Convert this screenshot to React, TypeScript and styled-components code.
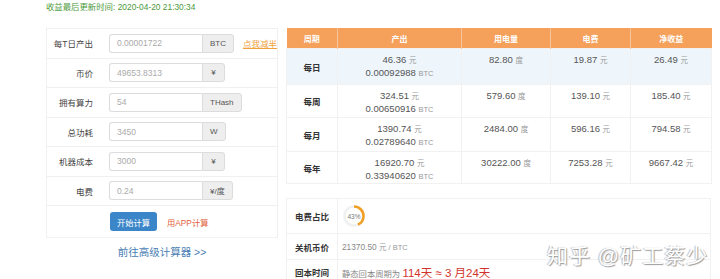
import React from 'react'
import styled, { createGlobalStyle } from 'styled-components'

interface Field {
  label: string
  value: string
  unit: string
  link?: string
}

interface ResultRow {
  period: string
  cny: string
  btc: string
  power: string
  fee: string
  profit: string
  height: number
  highlight?: boolean
}

const fields: Field[] = [
  { label: '每T日产出', value: '0.00001722', unit: 'BTC', link: '点我减半' },
  { label: '币价', value: '49653.8313', unit: '¥' },
  { label: '拥有算力', value: '54', unit: 'THash' },
  { label: '总功耗', value: '3450', unit: 'W' },
  { label: '机器成本', value: '3000', unit: '¥' },
  { label: '电费', value: '0.24', unit: '¥/度' },
]

const results: ResultRow[] = [
  { period: '每日', cny: '46.36', btc: '0.00092988', power: '82.80', fee: '19.87', profit: '26.49', height: 36, highlight: true },
  { period: '每周', cny: '324.51', btc: '0.00650916', power: '579.60', fee: '139.10', profit: '185.40', height: 33 },
  { period: '每月', cny: '1390.74', btc: '0.02789640', power: '2484.00', fee: '596.16', profit: '794.58', height: 34 },
  { period: '每年', cny: '16920.70', btc: '0.33940620', power: '30222.00', fee: '7253.28', profit: '9667.42', height: 32 },
]

const FEE_RATIO = 43

export default function App(): JSX.Element {
  const ringLength = 2 * Math.PI * 9.5
  return (
    <Page>
      <GlobalStyle />
      <Updated>收益最后更新时间: 2020-04-20 21:30:34</Updated>
      <Columns>
        <FormColumn>
          <FormCard>
            {fields.map((f) => (
              <FieldRow key={f.label}>
                <FieldLabel>{f.label}</FieldLabel>
                <InputGroup>
                  <Input defaultValue={f.value} readOnly />
                  <Addon>{f.unit}</Addon>
                </InputGroup>
                {f.link !== undefined ? <HalveLink>{f.link}</HalveLink> : null}
              </FieldRow>
            ))}
            <ActionRow>
              <PrimaryButton>开始计算</PrimaryButton>
              <AppLink>用APP计算</AppLink>
            </ActionRow>
          </FormCard>
          <AdvancedLink>前往高级计算器 &gt;&gt;</AdvancedLink>
        </FormColumn>

        <ResultColumn>
          <ResultTable>
            <colgroup>
              <col style={{ width: 51 }} />
              <col style={{ width: 124 }} />
              <col style={{ width: 89 }} />
              <col style={{ width: 80 }} />
              <col style={{ width: 81 }} />
            </colgroup>
            <thead>
              <tr>
                <HeadCell>周期</HeadCell>
                <HeadCell>产出</HeadCell>
                <HeadCell>用电量</HeadCell>
                <HeadCell>电费</HeadCell>
                <HeadCell>净收益</HeadCell>
              </tr>
            </thead>
            <tbody>
              {results.map((r) => (
                <BodyRow key={r.period} $height={r.height} $highlight={r.highlight}>
                  <PeriodCell>{r.period}</PeriodCell>
                  <ValueCell>
                    <Line>
                      {r.cny} <Unit>元</Unit>
                    </Line>
                    <Line>
                      {r.btc} <Unit>BTC</Unit>
                    </Line>
                  </ValueCell>
                  <ValueCell>
                    {r.power} <Unit>度</Unit>
                  </ValueCell>
                  <ValueCell>
                    {r.fee} <Unit>元</Unit>
                  </ValueCell>
                  <ValueCell>
                    {r.profit} <Unit>元</Unit>
                  </ValueCell>
                </BodyRow>
              ))}
            </tbody>
          </ResultTable>

          <SummaryTable>
            <colgroup>
              <col style={{ width: 51 }} />
              <col />
            </colgroup>
            <tbody>
              <SummaryRow $height={35}>
                <SummaryLabel>电费占比</SummaryLabel>
                <SummaryValue>
                  <Ring>
                    <svg width="24" height="24" viewBox="0 0 24 24">
                      <circle cx="12" cy="12" r="9.5" fill="none" stroke="#f1f1f1" strokeWidth="2.6" />
                      <circle
                        cx="12"
                        cy="12"
                        r="9.5"
                        fill="none"
                        stroke="#f0a024"
                        strokeWidth="2.6"
                        strokeDasharray={`${(ringLength * FEE_RATIO) / 100} ${ringLength}`}
                        transform="rotate(-90 12 12)"
                      />
                    </svg>
                    <RingText>{FEE_RATIO}%</RingText>
                  </Ring>
                </SummaryValue>
              </SummaryRow>
              <SummaryRow $height={26}>
                <SummaryLabel>关机币价</SummaryLabel>
                <SummaryValue>
                  21370.50 <Unit>元 / BTC</Unit>
                </SummaryValue>
              </SummaryRow>
              <SummaryRow $height={24}>
                <SummaryLabel>回本时间</SummaryLabel>
                <SummaryValue>
                  静态回本周期为 <Payback>114天 ≈ 3 月24天</Payback>
                </SummaryValue>
              </SummaryRow>
            </tbody>
          </SummaryTable>
        </ResultColumn>
      </Columns>
      <Watermark>知乎 @矿工蔡少</Watermark>
    </Page>
  )
}

const GlobalStyle = createGlobalStyle`
  html, body {
    margin: 0;
    background: #ffffff;
  }
  body {
    font-family: "Liberation Sans", "Noto Sans CJK SC", sans-serif;
    color: #333;
  }
`

const Page = styled.div`
  position: relative;
  width: 720px;
  height: 279px;
  overflow: hidden;
  padding-left: 46px;
  box-sizing: border-box;
`

const Updated = styled.div`
  height: 14px;
  line-height: 14px;
  font-size: 8.4px;
  color: #4e9a3c;
`

const Columns = styled.div`
  display: flex;
  gap: 8px;
  margin-top: 14px;
  align-items: flex-start;
`

const FormColumn = styled.div`
  width: 232px;
  display: flex;
  flex-direction: column;
`

const FormCard = styled.div`
  border: 1px solid #f0f0f0;
  border-bottom-color: #f3f3f3;
`

const FieldRow = styled.div`
  display: flex;
  align-items: center;
  height: 28.5px;
  border-bottom: 1px solid #f0f0f0;
`

const FieldLabel = styled.label`
  width: 46px;
  margin-right: 16px;
  text-align: right;
  font-size: 8.5px;
  color: #444;
`

const InputGroup = styled.div`
  display: flex;
  height: 19px;
`

const Input = styled.input`
  width: 93px;
  height: 19px;
  box-sizing: border-box;
  border: 1px solid #dcdcdc;
  border-right: none;
  border-radius: 3px 0 0 3px;
  padding: 0 7px;
  font-family: inherit;
  font-size: 8.5px;
  color: #aaa;
  outline: none;
`

const Addon = styled.span`
  min-width: 23px;
  box-sizing: border-box;
  padding: 0 7px;
  display: flex;
  align-items: center;
  justify-content: center;
  background: #eeeeee;
  border: 1px solid #dcdcdc;
  border-radius: 0 3px 3px 0;
  font-size: 8px;
  color: #555;
`

const HalveLink = styled.a`
  margin-left: 9px;
  font-size: 8.5px;
  color: #f0a23c;
  text-decoration: underline;
`

const ActionRow = styled.div`
  display: flex;
  align-items: center;
  gap: 10px;
  height: 31px;
  padding-left: 63px;
`

const PrimaryButton = styled.button`
  height: 19px;
  width: 47px;
  padding: 0;
  border: none;
  border-radius: 3px;
  background: #3b86c8;
  color: #ffffff;
  font-family: inherit;
  font-size: 8.3px;
`

const AppLink = styled.a`
  font-size: 8.3px;
  color: #e2623e;
`

const AdvancedLink = styled.a`
  margin-top: 7px;
  text-align: center;
  font-size: 10.5px;
  line-height: 14px;
  color: #4a80b4;
`

const ResultColumn = styled.div`
  width: 425px;
  display: flex;
  flex-direction: column;
  gap: 14px;
`

const ResultTable = styled.table`
  width: 425px;
  border-collapse: collapse;
  table-layout: fixed;
`

const HeadCell = styled.th`
  height: 20px;
  padding: 0;
  background: #f5a15c;
  color: #ffffff;
  font-size: 8px;
  font-weight: bold;
  border-left: 1px solid #f9c497;
  &:first-child {
    border-left: none;
  }
`

const BodyRow = styled.tr<{ $height: number; $highlight?: boolean }>`
  height: ${(p) => p.$height}px;
  background: ${(p) => (p.$highlight === true ? '#eef6fc' : '#ffffff')};
  td {
    border: 1px solid #f1f1f1;
  }
`

const PeriodCell = styled.td`
  padding: 0;
  text-align: center;
  vertical-align: middle;
  font-size: 8.5px;
  font-weight: bold;
  color: #333;
`

const ValueCell = styled.td`
  padding: 5px 4px 0;
  text-align: center;
  vertical-align: top;
  font-size: 9.5px;
  line-height: 12px;
  color: #555;
`

const Line = styled.div`
  line-height: 12px;
`

const Unit = styled.span`
  font-size: 7.5px;
  color: #999;
`

const SummaryTable = styled.table`
  width: 425px;
  border-collapse: collapse;
  table-layout: fixed;
  border: 1px solid #f1f1f1;
`

const SummaryRow = styled.tr<{ $height: number }>`
  height: ${(p) => p.$height}px;
  td {
    border-top: 1px solid #f1f1f1;
  }
`

const SummaryLabel = styled.td`
  padding: 0;
  text-align: center;
  font-size: 8.5px;
  font-weight: bold;
  color: #333;
  border-right: 1px solid #f1f1f1;
`

const SummaryValue = styled.td`
  padding: 0 4px;
  font-size: 8.3px;
  color: #888;
`

const Ring = styled.div`
  position: relative;
  width: 24px;
  height: 24px;
`

const RingText = styled.span`
  position: absolute;
  inset: 0;
  display: flex;
  align-items: center;
  justify-content: center;
  font-size: 6.5px;
  color: #777;
`

const Payback = styled.span`
  font-size: 11.5px;
  color: #d2322d;
`

const Watermark = styled.div`
  position: absolute;
  left: 547px;
  top: 239px;
  font-size: 21px;
  letter-spacing: 1px;
  color: #ffffff;
  text-shadow: 1px 1px 1px #9a9a9a, -1px 0 1px #bbbbbb;
  pointer-events: none;
`
